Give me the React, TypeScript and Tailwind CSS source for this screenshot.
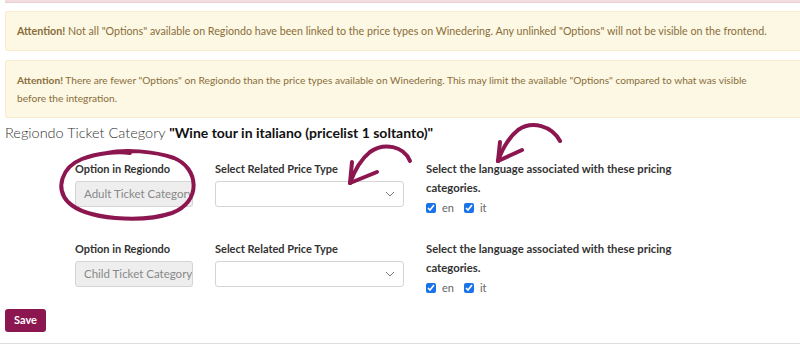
import React from 'react';

const FONT = "font-['Lato','Open_Sans',sans-serif]";

const ROWS = [
  { key: 'adult', option: 'Adult Ticket Category' },
  { key: 'child', option: 'Child Ticket Category' },
];

const Chevron = () => (
  <svg width="10" height="6" viewBox="0 0 10 6" className="text-[#777]">
    <path d="M1 1l4 4 4-4" fill="none" stroke="currentColor" strokeWidth="1" />
  </svg>
);

const MappingRow: React.FC<{ option: string }> = ({ option }) => (
  <div className="flex h-[80px] pl-[70px] text-[#333]">
    <div className="w-[118px] mr-[22px]">
      <div className="text-[11px] font-bold leading-[19px]">Option in Regiondo</div>
      <div className="mt-[3px] h-[26px] rounded-[3px] border border-[#d4d4d4] bg-[#eeeeee] px-[8px] text-[11.5px] leading-[24px] text-[#888] overflow-hidden whitespace-nowrap">
        {option}
      </div>
    </div>
    <div className="w-[189px] mr-[22px]">
      <div className="text-[11px] font-bold leading-[19px]">Select Related Price Type</div>
      <div className="mt-[3px] h-[26px] rounded-[3px] border border-[#d4d4d4] bg-white flex items-center justify-end pr-[8px]">
        <Chevron />
      </div>
    </div>
    <div className="w-[256px]">
      <div className="text-[11.3px] font-bold leading-[19px]">
        Select the language associated with these pricing categories.
      </div>
      <div className="mt-[3px] flex items-center text-[11px] text-[#666]">
        <label className="flex items-center mr-[10px]">
          <input type="checkbox" defaultChecked className="w-[10px] h-[10px] m-0 mr-[6px] accent-[#1a73e8]" />
          en
        </label>
        <label className="flex items-center">
          <input type="checkbox" defaultChecked className="w-[10px] h-[10px] m-0 mr-[6px] accent-[#1a73e8]" />
          it
        </label>
      </div>
    </div>
  </div>
);

const Annotations = () => (
  <svg className="absolute inset-0 pointer-events-none" width="800" height="360" viewBox="0 0 800 360">
    <g fill="none" stroke="#8c1650" strokeWidth="4" strokeLinecap="round" strokeLinejoin="round">
      {/* circle round the first option */}
      <path d="M107 153 C 124 149, 154 151, 174 158 C 199 168, 202 202, 172 213 C 142 223, 86 220, 68 202 C 55 188, 62 167, 82 159 C 98 153, 118 151, 130 153" />
      {/* arrow to the price type select */}
      <path d="M410 161 C 404 146, 384 142, 370 152 C 360 160, 354 172, 350 183" />
      <path d="M350 183 L 352 162" />
      <path d="M350 183 L 377 172" />
      {/* arrow to the language label */}
      <path d="M560 141 C 552 126, 532 120, 518 130 C 508 138, 502 150, 498 161" />
      <path d="M498 161 L 500 142" />
      <path d="M498 161 L 522 150" />
    </g>
  </svg>
);

export default function App() {
  return (
    <div className={`relative w-[800px] h-[360px] overflow-hidden bg-white ${FONT}`}>
      <div className="pl-[5px]">
        <div className="h-[3px] bg-[#f2dede] border-b border-[#ebccd1]" />

        <div className="mt-[8px] h-[40px] rounded-l-[3px] border border-r-0 border-[#faebcc] bg-[#fcf8e3] pl-[11px] flex items-center text-[10.7px] text-[#8a6d3b]">
          <p><b className="font-bold">Attention!</b> Not all "Options" available on Regiondo have been linked to the price types on Winedering. Any unlinked "Options" will not be visible on the frontend.</p>
        </div>

        <div className="mt-[9px] h-[58px] rounded-l-[3px] border border-r-0 border-[#faebcc] bg-[#fcf8e3] pl-[11px] flex items-center text-[10.2px] leading-[18px] text-[#8a6d3b]">
          <p>
            <span className="whitespace-nowrap"><b className="font-bold">Attention!</b> There are fewer "Options" on Regiondo than the price types available on Winedering. This may limit the available "Options" compared to what was visible</span>
            <br />
            before the integration.
          </p>
        </div>

        <h3 className="mt-[5px] text-[14.5px] leading-[20px] font-light text-[#333]">
          Regiondo Ticket Category <span className="text-[14px] font-bold text-[#111]">"Wine tour in italiano (pricelist 1 soltanto)"</span>
        </h3>

        <div className="mt-[16px]">
          {ROWS.map(r => <MappingRow key={r.key} option={r.option} />)}
        </div>

        <button className="block mt-[-10px] h-[23px] w-[41px] rounded-[3px] bg-[#8c1650] text-white text-[11px] font-bold">Save</button>
      </div>
      <div className="mt-[11px] h-px bg-[#dddddd]" />
      <Annotations />
    </div>
  );
}
